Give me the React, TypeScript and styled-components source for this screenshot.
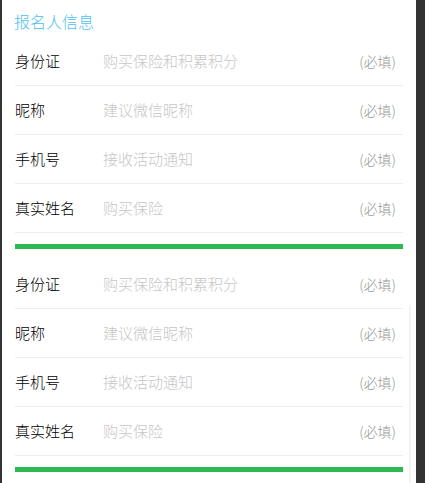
import React from 'react';
import styled, { createGlobalStyle } from 'styled-components';

const GlobalStyle = createGlobalStyle`
    html, body {
        margin: 0;
        padding: 0;
        background: #333333;
    }
    body {
        font-family: "Noto Sans CJK SC", "Noto Sans", sans-serif;
    }
`

const fields = [
    { label: '身份证', hint: '购买保险和积累积分' },
    { label: '昵称', hint: '建议微信昵称' },
    { label: '手机号', hint: '接收活动通知' },
    { label: '真实姓名', hint: '购买保险' },
];

function Section({ first }: { first?: boolean }): JSX.Element {
    return (
        <SectionBox $first={first}>
            {fields.map(f => (
                <Row key={f.label}>
                    <Label>{f.label}</Label>
                    <Field placeholder={f.hint} />
                    <Required>(必填)</Required>
                </Row>
            ))}
            <GreenBar />
        </SectionBox>
    )
}

export default function App(): JSX.Element {
    return (
        <Page>
            <GlobalStyle />
            <Title>报名人信息</Title>
            <Section first />
            <Section />
            <ScrollTrack />
        </Page>
    )
}

const Page = styled.div`
    position: relative;
    margin-left: 2px;
    width: 414px;
    min-height: 483px;
    box-sizing: border-box;
    padding: 0 13px;
    background: #ffffff;
`

const Title = styled.h2`
    margin: 0;
    padding-top: 10px;
    margin-bottom: 5px;
    margin-left: -1px;
    font-size: 16px;
    line-height: 22px;
    font-weight: 300;
    color: #4ec0f0;
`

const SectionBox = styled.div<{ $first?: boolean }>`
    display: flex;
    flex-direction: column;
    padding-top: ${props => props.$first ? '0' : '11px'};
`

const Row = styled.div`
    display: flex;
    align-items: center;
    height: 48px;
    padding-bottom: 1px;
    box-sizing: border-box;
    border-bottom: 1px solid #ededed;
    height: 49px;
`

const Label = styled.span`
    width: 88px;
    flex-shrink: 0;
    font-size: 15px;
    font-weight: 300;
    color: #000000;
`

const Field = styled.input`
    flex: 1;
    min-width: 0;
    border: none;
    outline: none;
    padding: 0;
    background: transparent;
    font-family: inherit;
    font-size: 15px;
    font-weight: 300;
    color: #333333;
    &::placeholder {
        color: #c6c6c6;
    }
`

const Required = styled.span`
    padding-right: 7px;
    font-size: 14px;
    font-weight: 300;
    color: #999999;
`

const GreenBar = styled.div`
    margin-top: 11px;
    height: 5px;
    background: #2cb853;
`

const ScrollTrack = styled.div`
    position: absolute;
    right: 5px;
    top: 305px;
    bottom: 0;
    width: 2px;
    background: #f4f4f4;
`
